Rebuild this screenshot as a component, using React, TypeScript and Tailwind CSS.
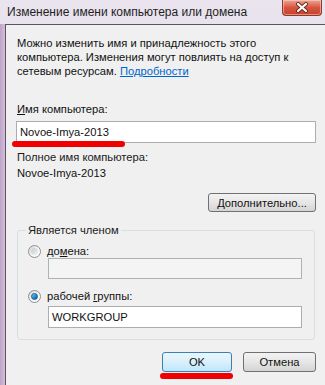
import React from "react";

function Radio({ checked }: { checked?: boolean }) {
  return (
    <span className="relative inline-flex h-[13px] w-[13px] shrink-0 items-center justify-center rounded-full border border-[#8e8f8f] bg-gradient-to-br from-[#d4d4d4] via-[#f4f4f4] to-[#ffffff]">
      {checked ? (
        <span className="h-[7px] w-[7px] rounded-full border border-[#1b5a8a] bg-gradient-to-br from-[#7fd0f7] via-[#2b8fd4] to-[#0d5aa0]" />
      ) : (
        <span className="h-[7px] w-[7px] rounded-full bg-gradient-to-br from-[#c9c9c9] to-[#f3f3f3]" />
      )}
    </span>
  );
}

export default function App() {
  const font = { fontFamily: '"Liberation Sans", Arial, sans-serif' };
  return (
    <div
      className="relative h-[385px] w-[325px] overflow-hidden bg-gradient-to-b from-[#e9e4ee] to-[#d9d0df] text-[11.2px] leading-[14px] text-[#111]"
      style={font}
    >
      {/* title bar */}
      <div className="flex h-[24px] items-center pl-[7px] text-[12px] text-[#1e1e1e]">
        Изменение имени компьютера или домена
      </div>
      {/* close button */}
      <div className="absolute right-[3px] top-0 flex h-[16px] w-[40px] items-center justify-center rounded-b-[4px] border border-t-0 border-[#8a3a30] bg-gradient-to-b from-[#e9a597] via-[#d9543e] to-[#c8402a] shadow-[inset_0_0_0_1px_rgba(255,220,210,0.5)]">
        <svg width="14" height="11" viewBox="0 0 14 11">
          <path d="M3 2 L11 9 M11 2 L3 9" stroke="#6a2a20" strokeWidth="4" strokeLinecap="round" />
          <path d="M3 2 L11 9 M11 2 L3 9" stroke="#ffffff" strokeWidth="2.2" strokeLinecap="round" />
        </svg>
      </div>

      <div className="flex h-full">
        {/* left frame strip */}
        <div className="w-[5px] shrink-0 bg-gradient-to-r from-[#bfa3c8] to-[#d3bfd9]" />
        {/* content */}
        <div className="flex flex-1 flex-col border-l border-t border-[#5d5262] bg-[#f0f0f0] pl-[10px] pr-[9px] pt-[11px]">
          <p className="pl-px">
            Можно изменить имя и принадлежность этого
            <br />
            компьютера. Изменения могут повлиять на доступ к
            <br />
            сетевым ресурсам. <span className="text-[#0066cc] underline">Подробности</span>
          </p>

          <div className="mt-[24px] pl-px">
            <u>И</u>мя компьютера:
          </div>
          <div className="mt-[5px] flex h-[22px] items-center border border-[#abadb3] bg-white pl-[3px]">
            Novoe-Imya-2013
          </div>

          <div className="mt-[7px] pl-px text-[#1a1a1a]">Полное имя компьютера:</div>
          <div className="mt-[2px] pl-px">Novoe-Imya-2013</div>

          <div className="mt-[13px] flex justify-end">
            <button className="flex h-[19px] w-[108px] items-center justify-center rounded-[3px] border border-[#707070] bg-gradient-to-b from-[#f3f3f3] via-[#e6e6e6] to-[#d4d4d4]">
              <u>Д</u>ополнительно...
            </button>
          </div>

          <fieldset className="mt-[11px] ml-px mr-px rounded-[3px] border border-[#d5dfe5] pb-[11px] pl-[10px] pr-[12px]">
            <legend className="ml-[-2px] px-[2px] text-[#1a1a1a]">Является членом</legend>
            <div className="mt-[7px] flex items-center gap-[6px]">
              <Radio />
              <span>
                до<u>м</u>ена:
              </span>
            </div>
            <div className="ml-[20px] h-[21px] border border-[#adb2b5] bg-[#f4f4f4]" />
            <div className="mt-[10px] flex items-center gap-[6px]">
              <Radio checked />
              <span>
                рабочей <u>г</u>руппы:
              </span>
            </div>
            <div className="ml-[20px] mt-[3px] flex h-[22px] items-center border border-[#abadb3] bg-white pl-[3px]">
              WORKGROUP
            </div>
          </fieldset>

          <div className="mt-[12px] flex justify-end gap-[11px]">
            <button className="flex h-[20px] w-[70px] items-center justify-center rounded-[3px] border border-[#3c7fb1] bg-gradient-to-b from-[#eaf6fd] via-[#d9f0fc] to-[#bee6fd]">
              OK
            </button>
            <button className="flex h-[20px] w-[73px] items-center justify-center rounded-[3px] border border-[#707070] bg-gradient-to-b from-[#f3f3f3] via-[#e6e6e6] to-[#d4d4d4]">
              Отмена
            </button>
          </div>
        </div>
      </div>

      {/* red marker strokes */}
      <div className="absolute left-[12px] top-[141px] h-[6px] w-[113px] rounded-full bg-[#f00000] blur-[0.5px]" />
      <div className="absolute left-[160px] top-[373px] h-[6px] w-[73px] rounded-full bg-[#f00000] blur-[0.5px]" />
    </div>
  );
}
